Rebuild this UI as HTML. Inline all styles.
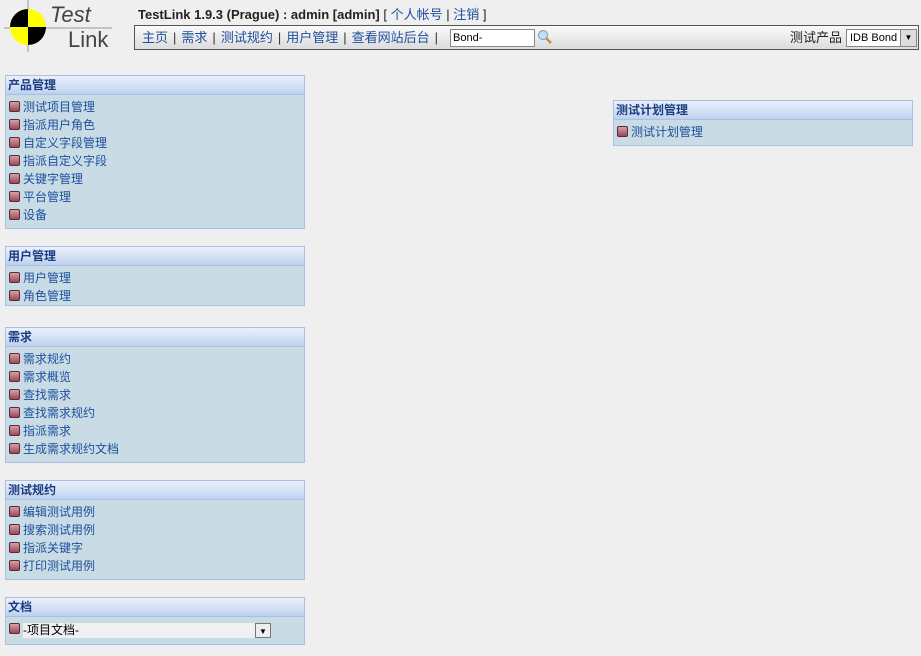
<!DOCTYPE html>
<html><head><meta charset="utf-8"><style>
body{margin:0;width:921px;height:656px;background:#efefef;font-family:"Liberation Sans","Noto Sans CJK SC",sans-serif;font-size:12px;position:relative;overflow:hidden}
a{color:#1d4f9c;text-decoration:none}
.blk{position:absolute;width:298px;border:1px solid #a9c0e4;background:#c9dce6}
.hd{height:18px;background:linear-gradient(#eaf0fa,#d2e0f4 60%,#bcd0ee);border-bottom:1px solid #a9c0e4;font-weight:bold;color:#1a3c82;line-height:18px;padding-left:2px;font-size:12px}
.bd{padding:3px 0 5px 3px}
.it{height:18px;line-height:18px;white-space:nowrap}
.b{display:inline-block;width:9px;height:9px;border:1px solid #5a2a30;border-radius:2px;background:linear-gradient(#d8a0aa,#9a4858);margin-right:3px;vertical-align:-1px}
.nav{position:absolute;top:4px;font-size:13px;line-height:16px;color:#333;white-space:nowrap}
.sep{margin:0 5px;color:#333}
</style></head><body>
<svg style="position:absolute;left:0;top:0" width="120" height="56">
<line x1="4" y1="28" x2="112" y2="28" stroke="#999" stroke-width="1"/>
<line x1="28" y1="0" x2="28" y2="52" stroke="#999" stroke-width="1"/>
<circle cx="28" cy="27" r="18" fill="#ffff00"/>
<path d="M28 9 A18 18 0 0 0 10 27 L28 27Z" fill="#000"/>
<path d="M28 27 L46 27 A18 18 0 0 1 28 45Z" fill="#000"/>
<text x="50" y="22" font-family="Liberation Sans,sans-serif" font-style="italic" font-size="22" fill="#444">Test</text>
<text x="68" y="47" font-family="Liberation Sans,sans-serif" font-size="22" fill="#444">Link</text>
</svg>
<div style="position:absolute;left:138px;top:4px;font-size:13px;font-weight:bold;color:#222">TestLink 1.9.3 (Prague) : admin [admin] <span style="font-weight:normal">[ <a>个人帐号</a> | <a>注销</a> ]</span></div>
<div style="position:absolute;left:134px;top:25px;width:783px;height:23px;border:1px solid #555;background:linear-gradient(#fafafa,#dcdcdc)">
<div class="nav" style="left:7px"><a>主页</a><span class="sep">|</span><a>需求</a><span class="sep">|</span><a>测试规约</a><span class="sep">|</span><a>用户管理</a><span class="sep">|</span><a>查看网站后台</a><span class="sep">|</span></div>
<div style="position:absolute;left:315px;top:3px;width:81px;height:16px;border:1px solid #888;background:#fff;font-size:11px;line-height:16px;padding-left:2px">Bond-</div>
<svg style="position:absolute;left:402px;top:3px" width="16" height="16"><circle cx="6" cy="6" r="4.5" fill="#bfe0f5" stroke="#6a9ac0"/><line x1="9" y1="9" x2="14" y2="14" stroke="#c09040" stroke-width="2.5"/></svg>
<div class="nav" style="left:655px;color:#222">测试产品</div>
<div style="position:absolute;left:711px;top:3px;width:66px;height:16px;border:1px solid #888;background:#fff;font-size:11px;line-height:16px;padding-left:3px">IDB Bond<span style="position:absolute;right:0;top:0;width:15px;height:16px;background:#ddd;border-left:1px solid #888;text-align:center;font-size:8px">▼</span></div>
</div>

<div class="blk" style="left:5px;top:75px;height:152px"><div class="hd">产品管理</div><div class="bd">
<div class="it"><span class="b"></span><a>测试项目管理</a></div><div class="it"><span class="b"></span><a>指派用户角色</a></div><div class="it"><span class="b"></span><a>自定义字段管理</a></div><div class="it"><span class="b"></span><a>指派自定义字段</a></div><div class="it"><span class="b"></span><a>关键字管理</a></div><div class="it"><span class="b"></span><a>平台管理</a></div><div class="it"><span class="b"></span><a>设备</a></div></div></div>

<div class="blk" style="left:5px;top:246px;height:58px"><div class="hd">用户管理</div><div class="bd">
<div class="it"><span class="b"></span><a>用户管理</a></div><div class="it"><span class="b"></span><a>角色管理</a></div></div></div>

<div class="blk" style="left:5px;top:327px;height:134px"><div class="hd">需求</div><div class="bd">
<div class="it"><span class="b"></span><a>需求规约</a></div><div class="it"><span class="b"></span><a>需求概览</a></div><div class="it"><span class="b"></span><a>查找需求</a></div><div class="it"><span class="b"></span><a>查找需求规约</a></div><div class="it"><span class="b"></span><a>指派需求</a></div><div class="it"><span class="b"></span><a>生成需求规约文档</a></div></div></div>

<div class="blk" style="left:5px;top:480px;height:98px"><div class="hd">测试规约</div><div class="bd">
<div class="it"><span class="b"></span><a>编辑测试用例</a></div><div class="it"><span class="b"></span><a>搜索测试用例</a></div><div class="it"><span class="b"></span><a>指派关键字</a></div><div class="it"><span class="b"></span><a>打印测试用例</a></div></div></div>

<div class="blk" style="left:5px;top:597px;height:46px"><div class="hd">文档</div><div class="bd" style="position:relative">
<div class="it"><span class="b"></span></div>
<div style="position:absolute;left:17px;top:6px;width:248px;height:15px;background:#f0f0f0;line-height:15px;font-size:12px">-项目文档-<span style="position:absolute;right:0;top:0;width:14px;height:13px;border:1px solid #777;background:#eee;font-size:8px;text-align:center">▼</span></div>
</div></div>

<div class="blk" style="left:613px;top:100px;height:44px"><div class="hd">测试计划管理</div><div class="bd">
<div class="it"><span class="b"></span><a>测试计划管理</a></div></div></div>
</body></html>
